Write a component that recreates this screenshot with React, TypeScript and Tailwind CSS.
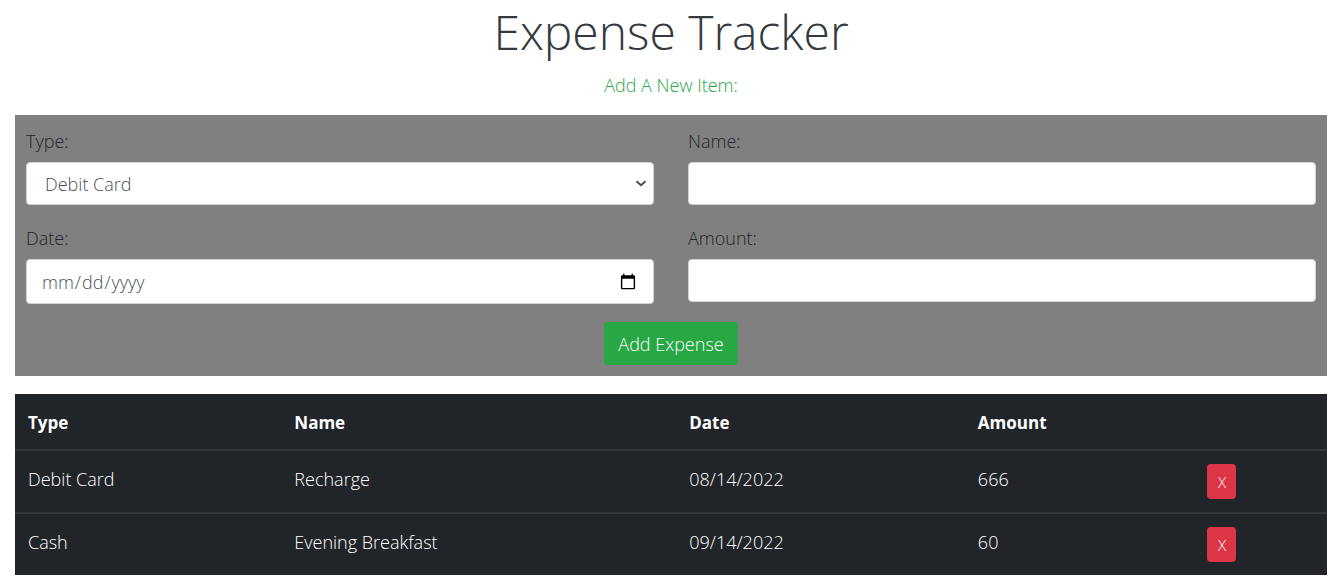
import { useState } from 'react';
import type { FormEvent } from 'react';

type Expense = { id: number; type: string; name: string; date: string; amount: string };

const initialExpenses: Expense[] = [
  { id: 1, type: 'Debit Card', name: 'Recharge', date: '08/14/2022', amount: '666' },
  { id: 2, type: 'Cash', name: 'Evening Breakfast', date: '09/14/2022', amount: '60' },
];

const control =
  'w-full rounded border border-[#ced4da] bg-white font-light text-[#495057] outline-none focus:border-[#80bdff]';
const label = 'mb-2 block pt-[2px]';

export default function App() {
  const [expenses, setExpenses] = useState<Expense[]>(initialExpenses);
  const [type, setType] = useState('Debit Card');
  const [name, setName] = useState('');
  const [date, setDate] = useState('');
  const [amount, setAmount] = useState('');

  const addExpense = (event: FormEvent) => {
    event.preventDefault();
    if (!name || !date || !amount) return;
    const [year, month, day] = date.split('-');
    setExpenses([...expenses, { id: Date.now(), type, name, date: `${month}/${day}/${year}`, amount }]);
    setName('');
    setDate('');
    setAmount('');
  };

  return (
    <main className="pr-[14px] pb-3 pl-[15px] font-['Open_Sans','Noto_Sans',sans-serif] text-[18px] leading-[26px] font-light text-[#212529]">
      <h1 className="text-center text-[48px] leading-[64px] font-light text-[#343a40]">Expense Tracker</h1>
      <p className="mt-2 text-center text-[#28a745]">Add A New Item:</p>

      <form onSubmit={addExpense} className="mt-[17px] bg-[#808080] p-[11px]">
        <div className="grid grid-cols-2 items-start gap-x-[34px] gap-y-[18px]">
          <div>
            <label htmlFor="type" className={label}>Type:</label>
            <div className="relative">
              <select
                id="type"
                value={type}
                onChange={(e) => setType(e.target.value)}
                className={`${control} block h-[43px] appearance-none pr-8 pl-[18px]`}
              >
                <option>Debit Card</option>
                <option>Credit Card</option>
                <option>Cash</option>
              </select>
              <svg
                viewBox="0 0 12 8"
                aria-hidden="true"
                className="pointer-events-none absolute top-[18px] right-[7px] h-2 w-3 fill-none stroke-[#495057] stroke-2"
              >
                <path d="M1.5 1.2 6 5.2l4.500-4" />
              </svg>
            </div>
          </div>
          <div>
            <label htmlFor="name" className={label}>Name:</label>
            <input id="name" type="text" value={name} onChange={(e) => setName(e.target.value)} className={`${control} block h-[43px] px-[13px]`} />
          </div>
          <div>
            <label htmlFor="date" className={label}>Date:</label>
            <input id="date" type="date" value={date} onChange={(e) => setDate(e.target.value)} className={`${control} block h-[45px] px-[14px]`} />
          </div>
          <div>
            <label htmlFor="amount" className={label}>Amount:</label>
            <input id="amount" type="text" value={amount} onChange={(e) => setAmount(e.target.value)} className={`${control} block h-[43px] px-[13px]`} />
          </div>
        </div>
        <div className="mt-[18px] flex justify-center">
          <button type="submit" className="h-[43px] rounded bg-[#28a745] px-[14px] font-light text-white hover:bg-[#218838]">
            Add Expense
          </button>
        </div>
      </form>

      <table className="mt-[18px] w-full table-fixed border-collapse bg-[#212529] text-left text-white">
        <thead>
          <tr className="h-14 border-b-2 border-[#32383e] text-[17px]">
            <th className="w-[20.3%] px-[13px] pt-[2px] font-bold">Type</th>
            <th className="w-[30.1%] px-[13px] pt-[2px] font-bold">Name</th>
            <th className="w-[22%] px-[13px] pt-[2px] font-bold">Date</th>
            <th className="w-[17.5%] px-[13px] pt-[2px] font-bold">Amount</th>
            <th aria-label="Remove" className="px-[13px]"></th>
          </tr>
        </thead>
        <tbody>
          {expenses.map((expense) => (
            <tr key={expense.id} className="border-b-2 border-[#32383e] align-top last:border-b-0">
              <td className="px-[13px] pt-[15px]">{expense.type}</td>
              <td className="px-[13px] pt-[15px]">{expense.name}</td>
              <td className="px-[13px] pt-[15px]">{expense.date}</td>
              <td className="px-[13px] pt-[15px]">{expense.amount}</td>
              <td className="px-[13px] py-[13px]">
                <button
                  type="button"
                  aria-label={`Remove ${expense.name}`}
                  onClick={() => setExpenses(expenses.filter((item) => item.id !== expense.id))}
                  className="block h-[35px] w-[29px] rounded bg-[#dc3545] text-[15px] font-light text-white hover:bg-[#c82333]"
                >
                  X
                </button>
              </td>
            </tr>
          ))}
        </tbody>
      </table>
    </main>
  );
}
